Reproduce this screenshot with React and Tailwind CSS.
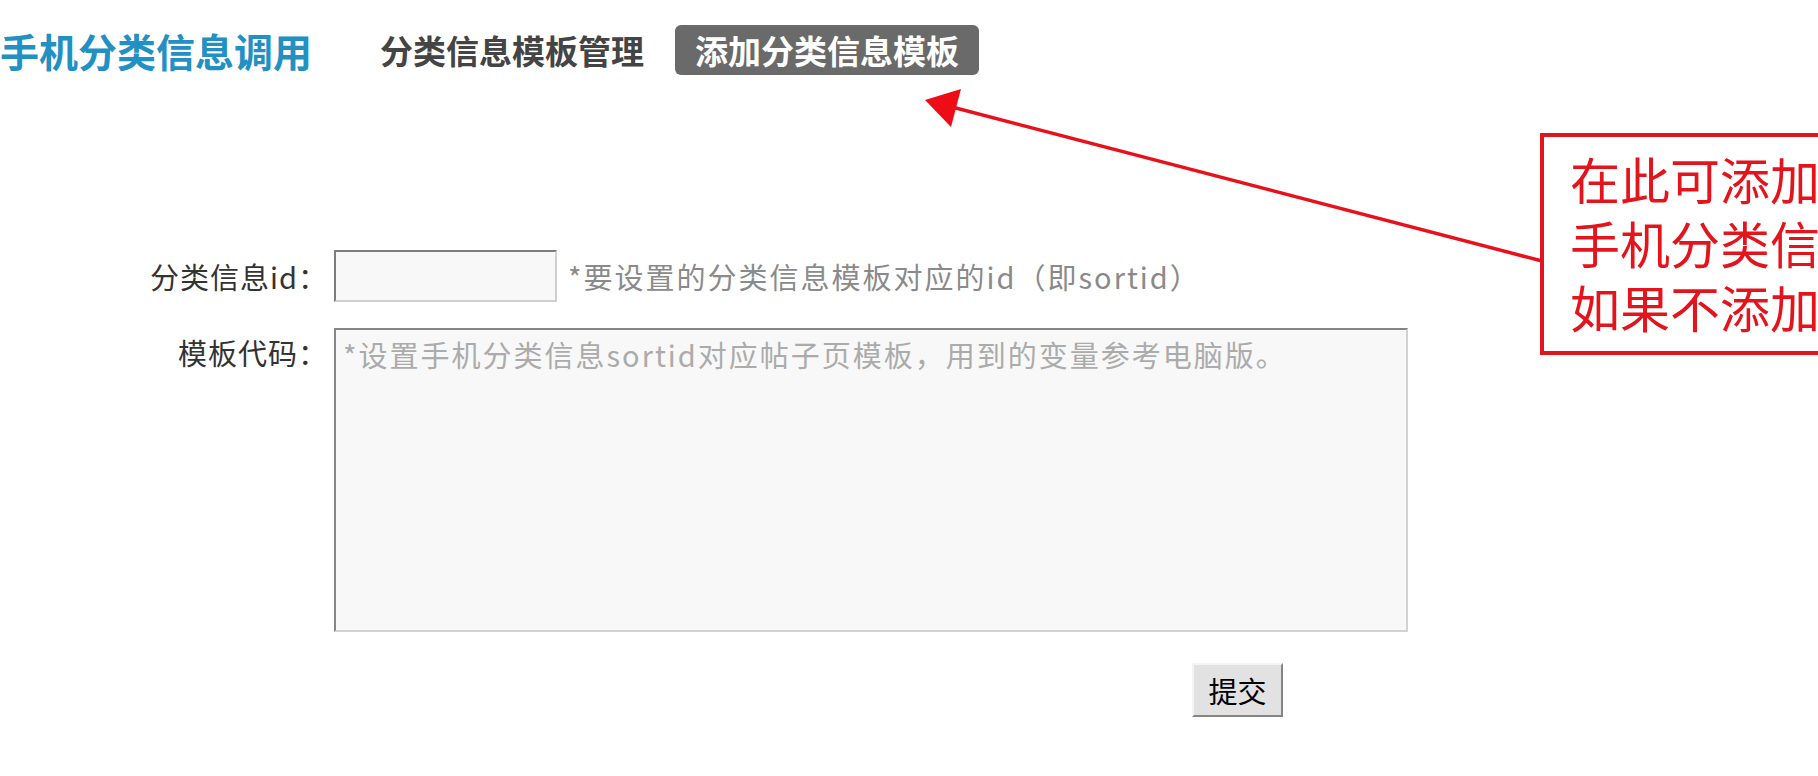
import React from "react";

const FONT = {
  fontFamily: '"Noto Sans CJK SC", "Noto Sans", sans-serif',
};

// 红色标注：箭头 + 说明框（覆盖在页面上）
const Annotation = () => (
  <>
    <svg
      className="pointer-events-none absolute left-0 top-0"
      width="1818"
      height="776"
      viewBox="0 0 1818 776"
    >
      <line
        x1="952"
        y1="107"
        x2="1542"
        y2="261"
        stroke="#e8101a"
        strokeWidth="3.5"
      />
      <polygon points="925,100 961,89 951,127" fill="#ee0d16" />
    </svg>
    <div className="absolute left-[1540px] top-[133px] h-[222px] w-[420px] border-[4px] border-[#e0161e] bg-white pl-[26px] pt-[9px]">
      <div className="whitespace-nowrap text-[50px] leading-[64px] text-[#e3141c]">
        <div>在此可添加手机分类信息模板</div>
        <div>手机分类信息模板调用</div>
        <div>如果不添加则默认显示</div>
      </div>
    </div>
  </>
);

export default function App() {
  return (
    <div
      className="relative h-[776px] w-[1818px] overflow-hidden bg-white"
      style={FONT}
    >
      {/* 顶部导航 */}
      <div className="flex items-center pt-[25px]">
        <div className="text-[39px] font-bold leading-none text-[#2390c4]">
          手机分类信息调用
        </div>
        <div className="ml-[68px] text-[33px] font-bold leading-none text-[#444]">
          分类信息模板管理
        </div>
        <div className="ml-[31px] flex h-[50px] items-center rounded-[6px] bg-[#6a6a6a] px-[20px] text-[33px] font-bold leading-none text-white">
          添加分类信息模板
        </div>
      </div>

      {/* 表单 */}
      <div className="mt-[175px]">
        <div className="flex items-center">
          <label className="w-[328px] text-right text-[29px] leading-none tracking-[1px] text-[#333]">
            分类信息id：
          </label>
          <input
            type="text"
            className="ml-[6px] h-[52px] w-[223px] border-2 border-b-[#cfcfcf] border-l-[#7d7d7d] border-r-[#cfcfcf] border-t-[#7d7d7d] bg-[#f8f8f8] px-2 text-[29px] outline-none"
          />
          <span className="ml-[11px] text-[29px] leading-none tracking-[2px] text-[#8a8a8a]">
            *要设置的分类信息模板对应的id（即sortid）
          </span>
        </div>

        <div className="mt-[26px] flex items-start">
          <label className="w-[328px] pt-[6px] text-right text-[29px] leading-[36px] tracking-[1px] text-[#333]">
            模板代码：
          </label>
          <textarea
            className="ml-[6px] h-[304px] w-[1074px] resize-none border-2 border-b-[#d2d2d2] border-l-[#858585] border-r-[#d2d2d2] border-t-[#858585] bg-[#f8f8f8] px-[7px] pt-[6px] text-[29px] leading-[36px] tracking-[2px] text-[#333] outline-none placeholder:text-[#ababab]"
            placeholder="*设置手机分类信息sortid对应帖子页模板，用到的变量参考电脑版。"
          />
        </div>

        <div className="mt-[31px] pl-[1192px]">
          <button className="h-[54px] w-[91px] border-2 border-b-[#858585] border-l-[#f4f4f4] border-r-[#858585] border-t-[#f4f4f4] bg-[#e2e2e2] text-[29px] leading-none text-black">
            提交
          </button>
        </div>
      </div>

      <Annotation />
    </div>
  );
}
